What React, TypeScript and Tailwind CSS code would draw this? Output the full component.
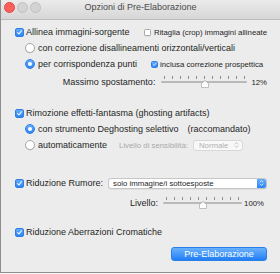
import React from "react";

type BoxProps = { on?: boolean; small?: boolean };

const Check: React.FC<BoxProps> = ({ on = true, small = false }) => {
  const size = small ? "w-[7px] h-[7px] rounded-[1.5px]" : "w-[9px] h-[9px] rounded-[2px]";
  const look = on
    ? "bg-linear-to-b from-[#62acfd] to-[#2a84f6] border border-[#2f7ee6]"
    : "bg-white border border-[#a9a9a9] shadow-[0_0.5px_0.5px_rgba(0,0,0,0.12)]";
  return (
    <span className={`shrink-0 flex items-center justify-center box-border ${size} ${look}`}>
      {on && (
        <svg viewBox="0 0 9 9" className="w-full h-full">
          <path d="M2.1 4.7 L3.8 6.4 L6.9 2.4" fill="none" stroke="white" strokeWidth="1.3" strokeLinecap="round" strokeLinejoin="round" />
        </svg>
      )}
    </span>
  );
};

const Radio: React.FC<{ on?: boolean }> = ({ on = false }) =>
  on ? (
    <span className="shrink-0 w-[10px] h-[10px] rounded-full box-border bg-linear-to-b from-[#62acfd] to-[#2a84f6] border border-[#2f7ee6] flex items-center justify-center">
      <span className="w-[3.5px] h-[3.5px] rounded-full bg-white" />
    </span>
  ) : (
    <span className="shrink-0 w-[10px] h-[10px] rounded-full box-border bg-white border border-[#a9a9a9] shadow-[0_0.5px_0.5px_rgba(0,0,0,0.12)]" />
  );

const UpDown: React.FC<{ color: string }> = ({ color }) => (
  <svg viewBox="0 0 6 9" className="w-[5px] h-[8px]">
    <path d="M1.3 3.4 L3 1.6 L4.7 3.4 M1.3 5.6 L3 7.4 L4.7 5.6" fill="none" stroke={color} strokeWidth="0.9" strokeLinecap="round" strokeLinejoin="round" />
  </svg>
);

// slider with tick marks above the track, knob pointing up
const Slider: React.FC<{ className: string; ticks: number; value: number }> = ({ className, ticks, value }) => (
  <div className={`relative h-[16px] ${className}`}>
    <div className="absolute left-[3px] right-[3px] top-[2px] flex justify-between">
      {Array.from({ length: ticks }).map((_, i) => (
        <span key={i} className="w-[0.7px] h-[2.5px] bg-[#8d8d8d]" />
      ))}
    </div>
    <div className="absolute left-0 right-0 top-[7px] h-[2px] rounded-full bg-[#b9b9b9]" />
    <svg
      viewBox="0 0 8 8"
      className="absolute top-[6px] w-[8px] h-[8px] drop-shadow-[0_0.5px_0.5px_rgba(0,0,0,0.3)]"
      style={{ left: `calc(${value * 100}% - 4px)` }}
    >
      <path d="M0.5 3.6 L4 0.5 L7.5 3.6 V7 Q7.5 7.5 7 7.5 H1 Q0.5 7.5 0.5 7 Z" fill="white" stroke="#a3a3a3" strokeWidth="0.5" />
    </svg>
  </div>
);

export default function App() {
  return (
    <div className="w-[280px] h-[274px] bg-[#f6f6f6] overflow-hidden font-['Liberation_Sans',Arial,sans-serif]">
      <div className="h-[273px] flex flex-col bg-[#ececec] border-l border-b border-[#8e8e8e] box-border">
        {/* title bar */}
        <div className="relative h-[20px] shrink-0 box-border border-b border-[#bcbcbc] bg-linear-to-b from-[#ebebeb] to-[#d6d6d6] flex justify-center">
          <div className="absolute left-[3px] top-[2px] flex gap-[2px]">
            <span className="w-[11px] h-[11px] rounded-full box-border bg-[#fc605c] border border-[#df4744]" />
            <span className="w-[11px] h-[11px] rounded-full box-border bg-[#d3d3d3] border border-[#c0c0c0]" />
            <span className="w-[11px] h-[11px] rounded-full box-border bg-[#d3d3d3] border border-[#c0c0c0]" />
          </div>
          <span className="pt-[2px] text-[9px] leading-[11px] text-[#4b4b4b]">Opzioni di Pre-Elaborazione</span>
        </div>

        <div className="flex flex-col pt-[4px] text-[9px] leading-[11px] text-[#1f1f1f]">
          <div className="h-[16px] flex items-center pl-[14px]">
            <div className="w-[129px] flex items-center gap-[2px]">
              <Check />
              <span>Allinea immagini-sorgente</span>
            </div>
            <div className="flex items-center gap-[3px] text-[7.8px]">
              <Check on={false} small />
              <span>Ritaglia (crop) immagini allineate</span>
            </div>
          </div>

          <div className="h-[16px] flex items-center gap-[3px] pl-[24px]">
            <Radio />
            <span>con correzione disallineamenti orizzontali/verticali</span>
          </div>

          <div className="h-[16px] flex items-center pl-[24px]">
            <div className="w-[126px] flex items-center gap-[3px]">
              <Radio on />
              <span>per corrispondenza punti</span>
            </div>
            <div className="flex items-center gap-[2px] text-[7.8px]">
              <Check small />
              <span>inclusa correzione prospettica</span>
            </div>
          </div>

          <div className="mt-[2px] h-[16px] flex items-center justify-end pr-[13px]">
            <span>Massimo spostamento:</span>
            <Slider className="w-[86px] ml-[6px]" ticks={11} value={0.51} />
            <span className="ml-[4px] text-[7.8px]">12%</span>
          </div>

          <div className="mt-[15px] h-[16px] flex items-center gap-[2px] pl-[14px]">
            <Check />
            <span>Rimozione effetti-fantasma (ghosting artifacts)</span>
          </div>

          <div className="h-[16px] flex items-center gap-[3px] pl-[24px]">
            <Radio on />
            <span>con strumento Deghosting selettivo</span>
            <span className="ml-[6px]">(raccomandato)</span>
          </div>

          <div className="h-[16px] flex items-center pl-[24px]">
            <Radio />
            <span className="ml-[3px]">automaticamente</span>
            <span className="ml-[12px] text-[7.8px] text-[#aaaaaa]">Livello di sensibilità:</span>
            <div className="ml-[5px] w-[50px] h-[11px] box-border rounded-[3px] border border-[#d8d8d8] bg-[#f8f8f8] flex items-center justify-between pl-[5px] pr-[3px] text-[7.8px] text-[#b0b0b0]">
              <span>Normale</span>
              <UpDown color="#b5b5b5" />
            </div>
          </div>

          <div className="mt-[22px] h-[16px] flex items-center pl-[14px] pr-[13px]">
            <Check />
            <span className="ml-[2px]">Riduzione Rumore:</span>
            <div className="ml-[5px] flex-1 h-[11px] box-border rounded-[3px] border border-[#c6c6c6] bg-white shadow-[0_0.5px_0.5px_rgba(0,0,0,0.1)] flex items-center overflow-hidden">
              <span className="flex-1 pl-[4px] text-[7.8px] text-[#1f1f1f]">solo immagine/i sottoesposte</span>
              <span className="w-[9px] h-full bg-linear-to-b from-[#62acfd] to-[#2a84f6] flex items-center justify-center">
                <UpDown color="white" />
              </span>
            </div>
          </div>

          <div className="mt-[4px] h-[16px] flex items-center justify-end pr-[16px]">
            <span>Livello:</span>
            <Slider className="w-[79px] ml-[5px]" ticks={10} value={0.5} />
            <span className="ml-[2px] text-[7.8px]">100%</span>
          </div>

          <div className="mt-[13px] h-[16px] flex items-center gap-[2px] pl-[14px]">
            <Check />
            <span>Riduzione Aberrazioni Cromatiche</span>
          </div>

          <div className="mt-[7px] flex justify-end pr-[13px]">
            <button className="w-[96px] h-[14px] rounded-[3px] bg-linear-to-b from-[#69b1fc] to-[#1f7ef5] border border-[#2a7fe8] box-border text-white text-[9px] leading-[11px] flex items-center justify-center">
              Pre-Elaborazione
            </button>
          </div>
        </div>
      </div>
    </div>
  );
}
